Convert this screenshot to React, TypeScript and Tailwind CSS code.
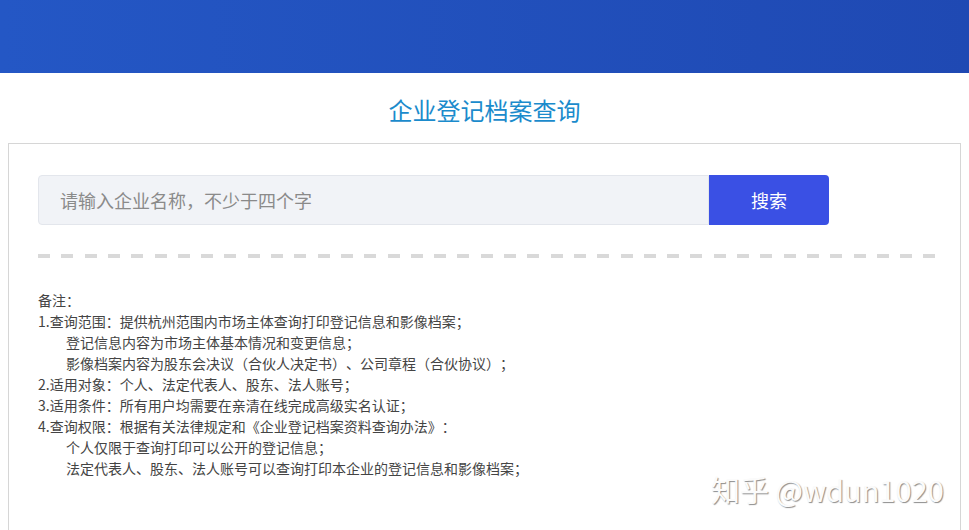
export default function App() {
  const notes: { text: string; indent?: boolean }[] = [
    { text: "备注：" },
    { text: "1.查询范围：提供杭州范围内市场主体查询打印登记信息和影像档案；" },
    { text: "登记信息内容为市场主体基本情况和变更信息；", indent: true },
    { text: "影像档案内容为股东会决议（合伙人决定书）、公司章程（合伙协议）；", indent: true },
    { text: "2.适用对象：个人、法定代表人、股东、法人账号；" },
    { text: "3.适用条件：所有用户均需要在亲清在线完成高级实名认证；" },
    { text: "4.查询权限：根据有关法律规定和《企业登记档案资料查询办法》：" },
    { text: "个人仅限于查询打印可以公开的登记信息；", indent: true },
    { text: "法定代表人、股东、法人账号可以查询打印本企业的登记信息和影像档案；", indent: true },
  ];

  return (
    <div className="relative h-[530px] w-[969px] overflow-hidden bg-white font-['Noto_Sans_CJK_SC',sans-serif] [text-spacing-trim:space-all]">
      <div className="h-[73px] bg-gradient-to-r from-[#2457c5] to-[#1f49b3]" />

      <h1 className="flex h-[70px] items-center justify-center pt-[3px] text-[24px] text-[#1b8bcc]">
        企业登记档案查询
      </h1>

      <div className="mx-[8px] h-[400px] border border-[#d6d6d6] px-[29px] pt-[31px]">
        <div className="flex">
          <div className="flex h-[50px] w-[671px] items-center rounded-l-[4px] border border-[#e3e6ec] bg-[#f1f3f7] pl-[21px] text-[18px] text-[#8a8a8a]">
            请输入企业名称，不少于四个字
          </div>
          <button className="h-[50px] w-[120px] rounded-r-[4px] bg-[#3a50e4] text-[18px] text-white">
            搜索
          </button>
        </div>

        <div className="mt-[29px] h-[4px] w-[902px] bg-[repeating-linear-gradient(90deg,#d9d9d9_0_12px,transparent_12px_23.3px)]" />

        <div className="mt-[32px] text-[14px] leading-[21px] text-[#444]">
          {notes.map((n, i) => (
            <div key={i} className={n.indent ? "pl-[28px]" : ""}>
              {n.text}
            </div>
          ))}
        </div>
      </div>

      <div className="absolute left-[711px] top-[470px] text-[29px] leading-[38px] text-[#fbfbfb] [text-shadow:1px_1px_1px_rgba(0,0,0,0.45)]">
        知乎 @wdun1020
      </div>
    </div>
  );
}
